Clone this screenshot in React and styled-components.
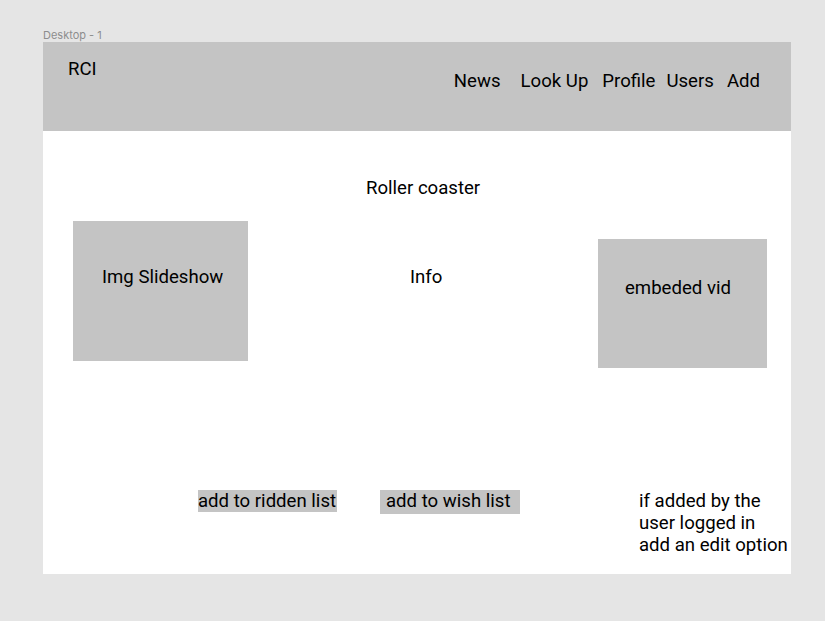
import styled, { createGlobalStyle } from "styled-components"

const GlobalStyle = createGlobalStyle`
  body {
    margin: 0;
    background: #e5e5e5;
    font-family: Roboto, "Liberation Sans", sans-serif;
  }
`

//page + frame
const Page = styled.div`
  min-height: 621px;
  padding: 28px 34px 0 43px;
  box-sizing: border-box;
`

const FrameLabel = styled.div`
  font-family: Inter, Roboto, sans-serif;
  font-size: 11px;
  line-height: 14px;
  color: #8d8d8d;
`

const Frame = styled.div`
  width: 748px;
  background: #fff;
  color: #000;
  font-size: 18.6px;
  line-height: 22px;
`

//header
const Header = styled.header`
  height: 89px;
  box-sizing: border-box;
  background: #c4c4c4;
  display: flex;
  align-items: flex-start;
  padding: 16px 31px 0 25px;
`

const Logo = styled.div``

const Nav = styled.nav`
  display: flex;
  margin-left: auto;
  margin-top: 12px;
`

const NavItem = styled.span`
  margin-left: ${props => props.gap || 0}px;
`

//body
const Body = styled.main`
  height: 443px;
  display: flex;
  flex-direction: column;
`

const Title = styled.div`
  margin: 46px 0 0 323px;
`

const Row = styled.div`
  display: flex;
  align-items: flex-start;
  margin-top: ${props => props.top}px;
  padding-left: ${props => props.left}px;
`

const Placeholder = styled.div`
  flex: none;
  width: ${props => props.w}px;
  height: ${props => props.h}px;
  box-sizing: border-box;
  background: #c4c4c4;
  padding: ${props => props.pt}px 0 0 ${props => props.pl}px;
  margin-top: ${props => props.mt || 0}px;
  margin-left: ${props => props.ml || 0}px;
`

const Info = styled.div`
  margin: 45px 0 0 162px;
  width: 32px;
`

const ListButton = styled.div`
  flex: none;
  box-sizing: border-box;
  width: ${props => props.w}px;
  height: ${props => props.h}px;
  background: #c4c4c4;
  padding-left: ${props => props.pl || 0}px;
  margin-left: ${props => props.gap || 0}px;
  white-space: nowrap;
`

const Note = styled.div`
  margin-left: 119px;
  white-space: nowrap;
`

export default function App() {
  return (
    <>
      <GlobalStyle />
      <Page>
        <FrameLabel>Desktop - 1</FrameLabel>
        <Frame>
          <Header>
            <Logo>RCI</Logo>
            <Nav>
              <NavItem>News</NavItem>
              <NavItem gap={20}>Look Up</NavItem>
              <NavItem gap={14}>Profile</NavItem>
              <NavItem gap={11}>Users</NavItem>
              <NavItem gap={13}>Add</NavItem>
            </Nav>
          </Header>
          <Body>
            <Title>Roller coaster</Title>
            <Row top={22} left={30}>
              <Placeholder w={175} h={140} pt={45} pl={29}>Img Slideshow</Placeholder>
              <Info>Info</Info>
              <Placeholder w={169} h={129} pt={38} pl={27} mt={18} ml={156}>
                embeded vid
              </Placeholder>
            </Row>
            <Row top={122} left={155}>
              <ListButton w={139} h={22}>add to ridden list</ListButton>
              <ListButton w={140} h={24} pl={6} gap={43}>add to wish list</ListButton>
              <Note>
                if added by the<br />
                user logged in<br />
                add an edit option
              </Note>
            </Row>
          </Body>
        </Frame>
      </Page>
    </>
  )
}
